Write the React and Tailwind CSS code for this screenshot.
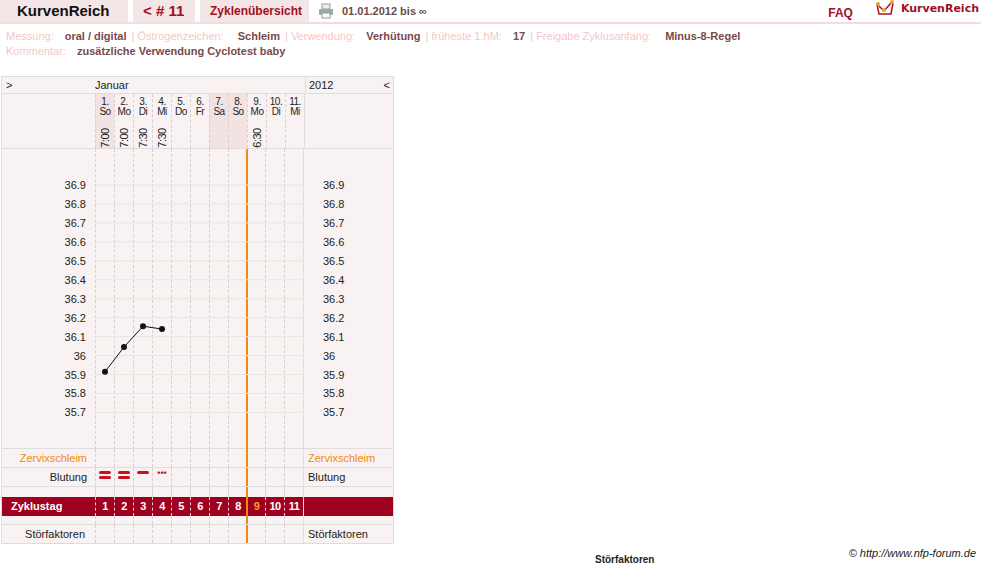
import React from "react";

const days = [
  ["1.", "So", "7:00", true],
  ["2.", "Mo", "7:00"],
  ["3.", "Di", "7:30"],
  ["4.", "Mi", "7:30"],
  ["5.", "Do", ""],
  ["6.", "Fr", ""],
  ["7.", "Sa", "", true],
  ["8.", "So", "", true],
  ["9.", "Mo", "6:30"],
  ["10.", "Di", ""],
  ["11.", "Mi", ""],
];
const temps = ["36.9", "36.8", "36.7", "36.6", "36.5", "36.4", "36.3", "36.2", "36.1", "36", "35.9", "35.8", "35.7"];
const CW = 19;

function DayCells({ children, h }) {
  return (
    <div className="flex">
      {days.map((d, i) => (
        <div key={i} className={`w-[19px] border-l border-dashed border-[#d8d0d0] ${i === 8 ? "border-l-2 border-solid border-l-[#f08a10] w-[19px] -ml-[1px]" : ""}`} style={{ height: h }}>
          {children ? children(i) : null}
        </div>
      ))}
    </div>
  );
}

export default function App() {
  const pts = [[0, 35.92], [1, 36.05], [2, 36.16], [3, 36.145]];
  const y = (t) => 185 - 148 + (36.9 - t) * 189.5;
  const v = "font-bold text-[#7a4a4a]";
  return (
    <div className="w-[981px] h-[563px] bg-white relative overflow-hidden text-[11px] text-[#222]" style={{ fontFamily: '"Liberation Sans", Arial, sans-serif' }}>
      <div className="flex items-stretch h-[24px] border-b-2 border-[#f2dcdc]">
        <div className="w-[128px] bg-[#f4e6e6] text-[15px] font-bold flex items-center pl-[17px] text-[#111]">KurvenReich</div>
        <div className="ml-[5px] w-[62px] bg-[#f4e6e6] text-[15px] font-bold flex items-center pl-[10px] text-[#a0101e]">&lt; # 11</div>
        <div className="ml-[5px] w-[109px] bg-[#f4e6e6] text-[12px] font-bold flex items-center pl-[10px] text-[#a0101e]">Zyklenübersicht</div>
        <div className="ml-[9px] flex items-center gap-[8px] text-[#6b4b4b] font-bold">
          <svg width="16" height="16" viewBox="0 0 16 16"><rect x="4" y="1" width="8" height="5" fill="#eee" stroke="#999"/><rect x="1" y="6" width="14" height="6" rx="1" fill="#9aa"/><rect x="4" y="10" width="8" height="5" fill="#fff" stroke="#999"/></svg>
          01.01.2012 bis ∞
        </div>
        <div className="ml-auto mr-[22px] flex items-center text-[#a0101e] font-bold text-[12px] pt-[4px]">FAQ</div>
        <div className="flex items-center mr-[2px] gap-[6px] pb-[4px]">
          <svg width="20" height="18" viewBox="0 0 20 18"><path d="M2 4 L4 14 L16 14 L18 3" fill="none" stroke="#b01020" strokeWidth="1.5"/><path d="M4 6 L9 11 L16 3" fill="none" stroke="#b01020" strokeWidth="1.5"/><circle cx="3" cy="4" r="2" fill="#f5a020"/><circle cx="9" cy="10" r="2" fill="#f5a020"/><circle cx="17" cy="2" r="2" fill="#f5a020"/></svg>
          <span className="text-[#a0101e] font-bold text-[11px]" style={{ fontFamily: '"DejaVu Sans", sans-serif' }}>KurvenReich</span>
        </div>
      </div>
      <div className="pl-[6px] pt-[5px] leading-[15px] text-[#f5c7c7]">
        <div>Messung: <span className={`ml-[8px] mr-[2px] ${v}`}>oral / digital</span> | Östrogenzeichen: <span className={`ml-[11px] mr-[2px] ${v}`}>Schleim</span> | Verwendung: <span className={`ml-[8px] mr-[2px] ${v}`}>Verhütung</span> | früheste 1.hM: <span className={`ml-[8px] mr-[2px] ${v}`}>17</span> | Freigabe Zyklusanfang: <span className={`ml-[11px] ${v}`}>Minus-8-Regel</span></div>
        <div>Kommentar: <span className={`ml-[8px] ${v}`}>zusätzliche Verwendung Cyclotest baby</span></div>
      </div>

      <div className="absolute left-[1px] top-[76px] w-[393px] border border-[#ddd] bg-[#f8f2f2]">
        <div className="flex h-[17px] border-b border-[#ddd] leading-[16px]">
          <div className="w-[303px] flex"><span className="pl-[4px] w-[93px]">&gt;</span><span>Januar</span></div>
          <div className="flex-1 border-l border-[#ddd] flex justify-between px-[3px]"><span>2012</span><span>&lt;</span></div>
        </div>
        <div className="flex h-[55px] border-b border-[#ddd]">
          <div className="w-[93px]" />
          {days.map((d, i) => (
            <div key={i} className={`w-[19px] border-l border-dashed border-[#d8d0d0] flex flex-col items-center text-[10px] leading-[10px] pt-[3px] ${d[3] ? "bg-[#f2e2e2]" : ""}`} style={{ letterSpacing: "-0.5px" }}>
              <span>{d[0]}</span><span>{d[1]}</span>
              {d[2] && <span className="mt-[16px] -rotate-90 inline-block text-[11px]">{d[2]}</span>}
            </div>
          ))}
          <div className="flex-1 border-l border-[#ddd]" />
        </div>
        <div className="flex h-[300px] border-b border-[#ddd] relative">
          <div className="w-[93px] relative">
            {temps.map((t, i) => <div key={t} className="absolute right-[9px] text-[11px]" style={{ top: 28 + i * 18.95 }}>{t}</div>)}
          </div>
          <DayCells h={300} />
          <div className="flex-1 border-l border-[#ddd] relative">
            {temps.map((t, i) => <div key={t} className="absolute left-[19px]" style={{ top: 28 + i * 18.95 }}>{t}</div>)}
          </div>
          <svg className="absolute left-[93px] top-0" width="210" height="300">
            {temps.map((t, i) => <line key={t} x1="0" x2="209" y1={36 + i * 18.95} y2={36 + i * 18.95} stroke="#ece2e2" strokeWidth="1" />)}
            <polyline points={pts.map(([d, t]) => `${d * CW + 10},${y(t)}`).join(" ")} fill="none" stroke="#111" strokeWidth="1" />
            {pts.map(([d, t]) => <circle key={d} cx={d * CW + 10} cy={y(t)} r="3" fill="#111" />)}
          </svg>
        </div>
        <div className="flex h-[19px] border-b border-[#ddd] leading-[18px]">
          <div className="w-[93px] text-right pr-[8px] text-[#f08a10]">Zervixschleim</div>
          <DayCells h={18} />
          <div className="flex-1 border-l border-[#ddd] pl-[4px] text-[#f08a10]">Zervixschleim</div>
        </div>
        <div className="flex h-[19px] border-b border-[#ddd] leading-[18px]">
          <div className="w-[93px] text-right pr-[8px]">Blutung</div>
          <DayCells h={18}>{(i) => i < 3 ? (
            <div className="flex flex-col items-center gap-[2px] pt-[3px]">{i < 2 ? <><div className="w-[12px] h-[3px] rounded bg-[#c8101e]" /><div className="w-[12px] h-[3px] rounded bg-[#c8101e]" /></> : <div className="w-[12px] h-[3px] rounded bg-[#c8101e]" />}</div>
          ) : i === 3 ? <div className="text-[#c8101e] text-[9px] leading-[10px] text-center font-bold">•••</div> : null}</DayCells>
          <div className="flex-1 border-l border-[#ddd] pl-[4px]">Blutung</div>
        </div>
        <div className="flex h-[10px]"><div className="w-[93px]" /><DayCells h={10} /><div className="flex-1 border-l border-[#ddd]" /></div>
        <div className="flex h-[19px] bg-[#a00020] text-white font-bold leading-[19px]">
          <div className="w-[93px] pl-[9px]">Zyklustag</div>
          {days.map((d, i) => (
            <div key={i} className={`w-[19px] text-center ${i === 8 ? "border-l-2 border-[#f08a10] text-[#f5a020] -ml-[1px]" : "border-l border-dashed border-white/80"}`} style={{ letterSpacing: "-0.5px" }}>{i + 1}</div>
          ))}
          <div className="flex-1 border-l border-[#ddd]" />
        </div>
        <div className="flex h-[9px] border-b border-[#ddd]"><div className="w-[93px]" /><DayCells h={8} /><div className="flex-1 border-l border-[#ddd]" /></div>
        <div className="flex h-[18px] leading-[18px]">
          <div className="w-[93px] text-right pr-[10px]">Störfaktoren</div>
          <DayCells h={18} />
          <div className="flex-1 border-l border-[#ddd] pl-[4px]">Störfaktoren</div>
        </div>
      </div>
      <div className="absolute right-[5px] top-[545px] italic text-[11px]">© http://www.nfp-forum.de</div>
      <div className="absolute left-[595px] top-[555px] font-bold text-[10px] leading-[10px]">Störfaktoren</div>
    </div>
  );
}
